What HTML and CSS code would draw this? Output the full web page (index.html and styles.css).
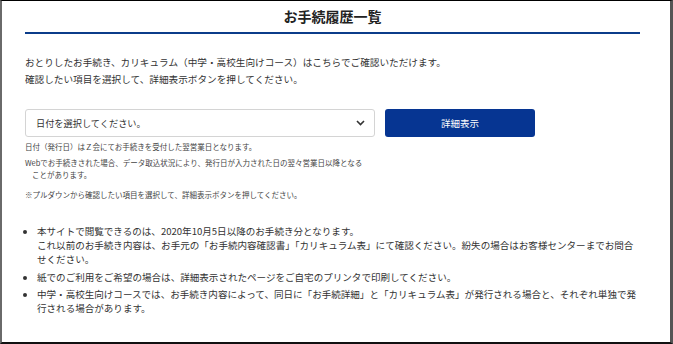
FILE: index.html
```html
<!DOCTYPE html>
<html lang="ja">
<head>
  <meta charset="UTF-8">
  <meta name="viewport" content="width=device-width, initial-scale=1.0">
  <title>お手続履歴一覧</title>
  <link rel="stylesheet" href="styles.css">
</head>
<body>

<div class="frame">
  <div class="container">
    <h1 class="title">お手続履歴一覧</h1>

    <p class="lead">おとりしたお手続き、カリキュラム（中学・高校生向けコース）はこちらでご確認いただけます。<br>確認したい項目を選択して、詳細表示ボタンを押してください。</p>

    <div class="picker">
      <div class="select">
        <span>日付を選択してください。</span>
        <svg width="9" height="6" viewBox="0 0 9 6"><path d="M1 1 L4.5 4.5 L8 1" fill="none" stroke="#333" stroke-width="1.6"/></svg>
      </div>
      <button class="detail-btn" type="button">詳細表示</button>
    </div>

    <div class="notes">
      <p>日付（発行日）はＺ会にてお手続きを受付した翌営業日となります。</p>
      <p class="indent">Webでお手続きされた場合、データ取込状況により、発行日が入力された日の翌々営業日以降となることがあります。</p>
      <p class="hint">※プルダウンから確認したい項目を選択して、詳細表示ボタンを押してください。</p>
    </div>

    <ul class="info">
      <li>本サイトで閲覧できるのは、2020年10月5日以降のお手続き分となります。<br>これ以前のお手続き内容は、お手元の「お手続内容確認書」「カリキュラム表」にて確認ください。紛失の場合はお客様センターまでお問合せください。</li>
      <li>紙でのご利用をご希望の場合は、詳細表示されたページをご自宅のプリンタで印刷してください。</li>
      <li>中学・高校生向けコースでは、お手続き内容によって、同日に「お手続詳細」と「カリキュラム表」が発行される場合と、それぞれ単独で発行される場合があります。</li>
    </ul>
  </div>
</div>

</body>
</html>
```

FILE: styles.css
```css
* {
  box-sizing: border-box;
  margin: 0;
  padding: 0;
}

html, body {
  width: 100%;
  height: 100%;
  background: #fff;
  font-family: "Noto Sans CJK JP", "Liberation Sans", sans-serif;
  color: #333;
}

.frame {
  height: 344px;
  border-top: 1px solid #000;
  border-left: 2px solid #6a6a6a;
  border-right: 3px solid #555;
  border-bottom: 2px solid #111;
  overflow: hidden;
}

.container {
  padding: 0 30px 0 23px;
}

.title {
  font-size: 14px;
  font-weight: bold;
  text-align: center;
  line-height: 20px;
  padding-top: 5px;
  padding-bottom: 6px;
  border-bottom: 2px solid #0b3c8a;
  color: #222;
}

.lead {
  margin-top: 20px;
  font-size: 9.65px;
  line-height: 17px;
}

.picker {
  display: flex;
  gap: 10px;
  margin-top: 21px;
}

.select {
  width: 350px;
  height: 28px;
  border: 1px solid #d4d4d4;
  border-radius: 3px;
  display: flex;
  align-items: center;
  justify-content: space-between;
  padding: 0 9px 0 10px;
  font-size: 9.2px;
}

.detail-btn {
  width: 150px;
  height: 28px;
  background: #063592;
  color: #fff;
  border: none;
  border-radius: 3px;
  font-family: inherit;
  font-size: 9.5px;
}

.notes {
  margin-top: 4px;
  font-size: 7.5px;
  line-height: 12px;
  color: #444;
}

.notes p {
  margin-bottom: 4px;
}

.notes .indent {
  width: 342px;
  padding-left: 7px;
  text-indent: -7px;
}

.notes .hint {
  margin-top: 8px;
}

.info {
  margin-top: 23px;
  padding-left: 12px;
  font-size: 9.55px;
  line-height: 14px;
}

.info li {
  margin-bottom: 3.5px;
}
```
